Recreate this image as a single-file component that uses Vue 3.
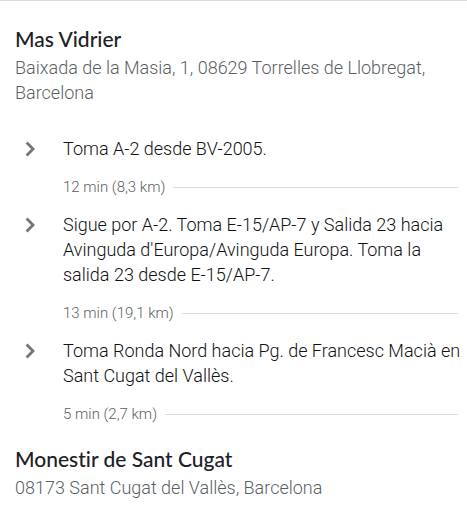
<script setup>
const origin = { name: 'Mas Vidrier', address: 'Baixada de la Masia, 1, 08629 Torrelles de Llobregat, Barcelona' }
const destination = { name: 'Monestir de Sant Cugat', address: '08173 Sant Cugat del Vallès, Barcelona' }
const steps = [
  { text: 'Toma A-2 desde BV-2005.', cost: '12 min (8,3 km)' },
  { text: "Sigue por A-2. Toma E-15/AP-7 y Salida 23 hacia Avinguda d'Europa/Avinguda Europa. Toma la salida 23 desde E-15/AP-7.", cost: '13 min (19,1 km)' },
  { text: 'Toma Ronda Nord hacia Pg. de Francesc Macià en Sant Cugat del Vallès.', cost: '5 min (2,7 km)' },
]
</script>

<template>
  <main class="directions">
    <header class="place">
      <h2>{{ origin.name }}</h2>
      <p>{{ origin.address }}</p>
    </header>
    <ol class="steps">
      <li v-for="step in steps" :key="step.text" class="step">
        <button class="toggle" type="button" aria-label="Mostrar detalles">
          <svg viewBox="0 0 24 24" width="24" height="24" aria-hidden="true">
            <path d="M7.600 5.600L14 12L7.600 18.400" />
          </svg>
        </button>
        <div class="body">
          <p class="text">{{ step.text }}</p>
          <div class="cost"><span>{{ step.cost }}</span></div>
        </div>
      </li>
    </ol>
    <footer class="place">
      <h2>{{ destination.name }}</h2>
      <p>{{ destination.address }}</p>
    </footer>
  </main>
</template>

<style>
body {
  background: #fff;
}
</style>

<style scoped>
.directions {
  border-top: 1px solid #dadce0;
  padding: 23px 3px 24px 15px;
  font-family: Roboto, sans-serif;
  font-size: 18px;
  font-weight: 300;
  line-height: 25px;
  color: #111214;
}
h2,
p,
ol {
  margin: 0;
  padding: 0;
}
.place h2 {
  padding-bottom: 1px;
  font-family: Lato, sans-serif;
  font-size: 21px;
  line-height: 30px;
  font-weight: 500;
  color: #202124;
  font-variant-ligatures: none;
}
.place p {
  color: #5a5f64;
}
.steps {
  list-style: none;
  padding: 31px 0 20px;
}
.step {
  display: flex;
  gap: 20px;
}
.step + .step {
  padding-top: 15px;
}
.toggle {
  flex: none;
  width: 28px;
  height: 25px;
  padding: 0 0 0 4px;
  border: 0;
  background: none;
  cursor: pointer;
}
.toggle svg {
  display: block;
  fill: none;
  stroke: #757575;
  stroke-width: 2.8px;
}
.body {
  flex: 1;
  min-width: 0;
}
.cost {
  display: flex;
  align-items: center;
  gap: 8px;
  margin: 16px 6px 0 0;
  font-size: 15px;
  line-height: 20px;
  color: #5a5f64;
}
.cost::after {
  content: '';
  flex: 1;
  border-top: 1px solid #dadce0;
}
</style>
